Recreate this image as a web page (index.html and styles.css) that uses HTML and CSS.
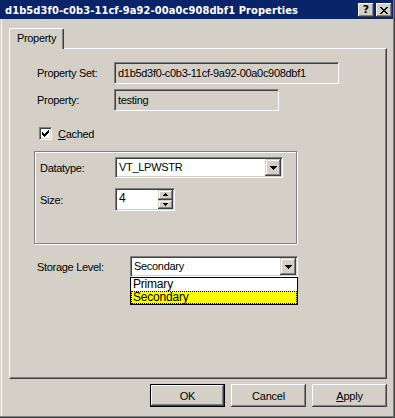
FILE: index.html
```html
<!DOCTYPE html>
<html>
<head>
<meta charset="utf-8">
<title>Properties</title>
<link rel="stylesheet" href="styles.css">
</head>
<body>
<div class="window">
  <div class="frame">
    <div class="titlebar">
      <span class="title">d1b5d3f0-c0b3-11cf-9a92-00a0c908dbf1 Properties</span>
      <div class="caption-buttons">
        <span class="cap-btn help">?</span>
        <span class="cap-btn close">
          <svg width="8" height="7" viewBox="0 0 8 7" shape-rendering="crispEdges"><path d="M0 0h2v1h1v1h2v-1h1v-1h2v1h-1v1h-1v1h-1v1h1v1h1v1h1v1h-2v-1h-1v-1h-2v1h-1v1h-2v-1h1v-1h1v-1h1v-1h-1v-1h-1v-1h-1z" fill="#000"/></svg>
        </span>
      </div>
    </div>
    <div class="client">
      <div class="tabs"><div class="tab">Property</div></div>
      <div class="panel">
        <div class="row">
          <span class="label">Property Set:</span>
          <div class="edit readonly wide">d1b5d3f0-c0b3-11cf-9a92-00a0c908dbf1</div>
        </div>
        <div class="row row-prop">
          <span class="label">Property:</span>
          <div class="edit readonly medium">testing</div>
        </div>
        <div class="check-row">
          <span class="checkbox">
            <svg width="7" height="7" viewBox="0 0 7 7" shape-rendering="crispEdges"><path d="M0 2h1v3H0zM1 3h1v3H1zM2 4h1v3H2zM3 3h1v3H3zM4 2h1v3H4zM5 1h1v3H5zM6 0h1v3H6z" fill="#000"/></svg>
          </span>
          <span class="check-label"><u>C</u>ached</span>
        </div>
        <div class="group">
          <div class="row">
            <span class="g-label">Datatype:</span>
            <div class="combo dt">
              <span class="combo-text">VT_LPWSTR</span>
              <span class="drop-btn"><svg width="7" height="4" viewBox="0 0 7 4" shape-rendering="crispEdges"><path d="M0 0h7v1H0zM1 1h5v1H1zM2 2h3v1H2zM3 3h1v1H3z" fill="#000"/></svg></span>
            </div>
          </div>
          <div class="row size-row">
            <span class="g-label">Size:</span>
            <div class="spin">
              <span class="spin-text">4</span>
              <span class="spin-btns">
                <span class="spin-btn"><svg width="5" height="3" viewBox="0 0 5 3" shape-rendering="crispEdges"><path d="M2 0h1v1H2zM1 1h3v1H1zM0 2h5v1H0z" fill="#000"/></svg></span>
                <span class="spin-btn"><svg width="5" height="3" viewBox="0 0 5 3" shape-rendering="crispEdges"><path d="M0 0h5v1H0zM1 1h3v1H1zM2 2h1v1H2z" fill="#000"/></svg></span>
              </span>
            </div>
          </div>
        </div>
        <div class="row storage-row">
          <span class="label storage-label">Storage Level:</span>
          <div class="combo-wrap">
            <div class="combo st">
              <span class="combo-text">Secondary</span>
              <span class="drop-btn"><svg width="7" height="4" viewBox="0 0 7 4" shape-rendering="crispEdges"><path d="M0 0h7v1H0zM1 1h5v1H1zM2 2h3v1H2zM3 3h1v1H3z" fill="#000"/></svg></span>
            </div>
            <ul class="dropdown-list">
              <li>Primary</li>
              <li class="selected">Secondary</li>
            </ul>
          </div>
        </div>
      </div>
      <div class="buttons">
        <button class="btn default">OK</button>
        <button class="btn">Cancel</button>
        <button class="btn"><u>A</u>pply</button>
      </div>
    </div>
  </div>
</div>
</body>
</html>
```
FILE: styles.css
```css
* { box-sizing: border-box; }

html, body {
  margin: 0;
  padding: 0;
}

body {
  width: 395px;
  height: 418px;
  overflow: hidden;
  background: #d4d0c8;
  font-family: "Liberation Sans", Arial, sans-serif;
  font-size: 11px;
  letter-spacing: -0.3px;
  color: #000;
}

.window {
  width: 395px;
  height: 418px;
  background: #d4d0c8;
  border-right: 1px solid #404040;
  border-bottom: 1px solid #404040;
}

.frame {
  height: 100%;
  display: flex;
  flex-direction: column;
  border-right: 1px solid #808080;
  border-bottom: 1px solid #808080;
}

/* Title bar */
.titlebar {
  flex: none;
  height: 19px;
  background: #0a246a;
  display: flex;
  justify-content: space-between;
  align-items: flex-start;
  padding: 0 1px 0 5px;
  color: #fff;
}

.title {
  font-family: "DejaVu Sans Condensed", "DejaVu Sans", "Liberation Sans", sans-serif;
  font-weight: bold;
  font-size: 11px;
  letter-spacing: 0.1px;
  line-height: 19px;
  padding-top: 1px;
  white-space: nowrap;
}

.caption-buttons {
  display: flex;
  gap: 2px;
  margin-top: 3px;
}

.cap-btn {
  width: 16px;
  height: 14px;
  background: #d4d0c8;
  box-shadow: inset -1px -1px #404040, inset 1px 1px #fff, inset -2px -2px #808080;
  display: flex;
  align-items: center;
  justify-content: center;
  color: #000;
}

.help {
  font-family: "DejaVu Sans", sans-serif;
  font-weight: bold;
  font-size: 11px;
  letter-spacing: 0;
  line-height: 14px;
}

.close svg { display: block; }

/* Client area */
.client {
  flex: 1;
  padding: 9px 0 0 9px;
  box-shadow: inset 1px 0 #d4d0c8, inset 2px 0 #fff;
}

.tabs {
  display: flex;
  height: 20px;
  position: relative;
  z-index: 1;
}

.tab {
  width: 55px;
  height: 21px;
  background: #d4d0c8;
  border-left: 1px solid #fff;
  border-top: 1px solid #fff;
  border-right: 1px solid #404040;
  border-top-left-radius: 2px;
  border-top-right-radius: 2px;
  box-shadow: inset -1px 0 #808080;
  text-align: center;
  line-height: 19px;
}

.panel {
  width: 378px;
  height: 331px;
  border-top: 1px solid #fff;
  border-left: 1px solid #fff;
  border-right: 1px solid #404040;
  border-bottom: 1px solid #404040;
  box-shadow: inset -1px -1px #808080;
  padding: 13px 0 0 27px;
  display: flex;
  flex-direction: column;
  align-items: flex-start;
}

.row {
  display: flex;
  align-items: center;
}

.label {
  width: 77px;
  flex: none;
}

.edit {
  height: 22px;
  border: 1px solid;
  border-color: #808080 #fff #fff #808080;
  box-shadow: inset 1px 1px #404040, inset -1px -1px #d4d0c8;
  padding: 0 3px;
  line-height: 20px;
  white-space: nowrap;
  overflow: hidden;
}

.readonly { background: #d4d0c8; }
.wide { width: 225px; }
.medium { width: 165px; }

.row-prop { margin-top: 5px; }

.check-row {
  display: flex;
  align-items: center;
  height: 13px;
  margin-top: 16px;
  margin-left: 2px;
}

.checkbox {
  width: 13px;
  height: 13px;
  background: #fff;
  border: 1px solid;
  border-color: #808080 #fff #fff #808080;
  box-shadow: inset 1px 1px #404040, inset -1px -1px #d4d0c8;
  display: flex;
  align-items: center;
  justify-content: center;
  margin-right: 6px;
}

.checkbox svg { display: block; }

.group {
  width: 263px;
  height: 93px;
  margin-top: 11px;
  margin-left: -3px;
  border: 1px solid #808080;
  box-shadow: inset 1px 1px #fff, 1px 1px #fff;
  padding: 5px 0 0 5px;
}

.g-label {
  width: 75px;
  flex: none;
}

.size-row { margin-top: 10px; }

.combo {
  display: flex;
  height: 21px;
  background: #fff;
  border: 1px solid;
  border-color: #808080 #fff #fff #808080;
  box-shadow: inset 1px 1px #404040, inset -1px -1px #d4d0c8;
  padding: 1px;
}

.combo.dt { width: 168px; }
.combo.st { width: 168px; }

.combo-text {
  flex: 1;
  padding-left: 2px;
  line-height: 17px;
  white-space: nowrap;
}

.drop-btn {
  width: 16px;
  height: 17px;
  background: #d4d0c8;
  box-shadow: inset -1px -1px #404040, inset 1px 1px #d4d0c8, inset -2px -2px #808080, inset 2px 2px #fff;
  display: flex;
  align-items: center;
  justify-content: center;
}

.drop-btn svg { display: block; }

.spin {
  display: flex;
  width: 60px;
  height: 23px;
  background: #fff;
  border: 1px solid;
  border-color: #808080 #fff #fff #808080;
  box-shadow: inset 1px 1px #404040, inset -1px -1px #d4d0c8;
  padding: 1px;
}

.spin-text {
  flex: 1;
  padding-left: 2px;
  line-height: 17px;
  font-size: 12px;
}

.spin-btns {
  width: 15px;
  display: flex;
  flex-direction: column;
}

.spin-btn {
  flex: 1;
  background: #d4d0c8;
  box-shadow: inset -1px -1px #404040, inset 1px 1px #d4d0c8, inset -2px -2px #808080, inset 2px 2px #fff;
  display: flex;
  align-items: center;
  justify-content: center;
}

.spin-btn svg { display: block; }

.storage-row { margin-top: 12px; }

.storage-label { width: 93px; }

.combo-wrap {
  position: relative;
}

.dropdown-list {
  position: absolute;
  top: 21px;
  left: 0;
  width: 168px;
  margin: 0;
  padding: 0;
  list-style: none;
  background: #fff;
  border: 1px solid #000;
  z-index: 2;
  font-size: 12px;
  letter-spacing: -0.2px;
}

.dropdown-list li {
  height: 13px;
  line-height: 13px;
  padding-left: 2px;
  white-space: nowrap;
}

.dropdown-list li.selected {
  background: #ffff00;
  outline: 1px dotted #000;
  outline-offset: -1px;
}

/* Bottom buttons */
.buttons {
  width: 378px;
  display: flex;
  justify-content: flex-end;
  gap: 6px;
  margin-top: 5px;
}

.btn {
  width: 75px;
  height: 23px;
  padding: 0;
  border: none;
  background: #d4d0c8;
  font-family: "Liberation Sans", Arial, sans-serif;
  font-size: 11px;
  letter-spacing: -0.2px;
  color: #000;
  box-shadow: inset -1px -1px #404040, inset 1px 1px #fff, inset -2px -2px #808080;
}

.btn.default {
  border: 1px solid #000;
}
```
